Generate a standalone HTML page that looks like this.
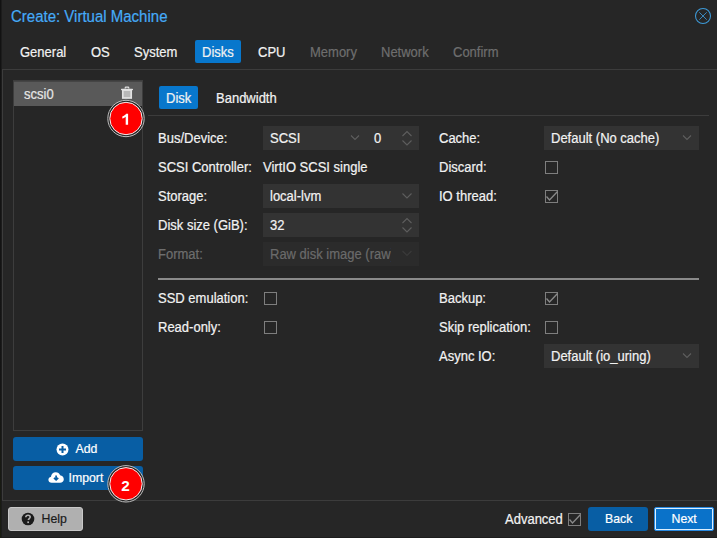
<!DOCTYPE html>
<html><head><meta charset="utf-8">
<style>
*{margin:0;padding:0;box-sizing:border-box}
html,body{width:717px;height:538px;overflow:hidden;background:#262626}
body{position:relative;font-family:"Liberation Sans",sans-serif;font-size:13px;color:#f2f2f2}
.a{position:absolute}
.t{position:absolute;white-space:nowrap;line-height:15px;font-size:13px;-webkit-text-stroke:0.2px currentColor;transform:scaleY(1.07);transform-origin:0 12px}
.dis{color:#6e6e6e}
.field{position:absolute;background:#333333;height:24px}
.cb{position:absolute;width:13px;height:13px;border:1px solid #7e7e7e}
.chev{position:absolute}
.btn{position:absolute;border-radius:3px;background:#085ea4;color:#fff}
</style></head>
<body>
<!-- window left dark edge -->
<div class="a" style="left:0;top:0;width:1px;height:538px;background:linear-gradient(#121212 0,#141414 380px,#1a1d12 538px)"></div>
<div class="a" style="left:1px;top:0;width:1px;height:538px;background:#1c1c1c"></div>

<div class="a" style="left:2px;top:537px;width:715px;height:1px;background:#1d1d1d"></div>
<!-- title -->
<div class="t" style="left:11px;top:8px;font-size:15px;line-height:17px;color:#45abf8">Create: Virtual Machine</div>
<!-- close icon -->
<svg class="a" style="left:694px;top:7px" width="18" height="18" viewBox="0 0 18 18">
 <circle cx="9" cy="9" r="7.5" fill="none" stroke="#3d9ad8" stroke-width="1.05"/>
 <path d="M5.3 5.3L12.7 12.7M12.7 5.3L5.3 12.7" stroke="#3d9ad8" stroke-width="0.85"/>
</svg>

<!-- tabs -->
<div class="a" style="left:195px;top:40px;width:46px;height:23px;background:#0877cc;border-radius:2px"></div>
<div class="t" style="left:20px;top:45px">General</div>
<div class="t" style="left:91px;top:45px">OS</div>
<div class="t" style="left:134px;top:45px">System</div>
<div class="t" style="left:202px;top:45px">Disks</div>
<div class="t" style="left:258px;top:45px">CPU</div>
<div class="t dis" style="left:310px;top:45px">Memory</div>
<div class="t dis" style="left:381px;top:45px">Network</div>
<div class="t dis" style="left:453px;top:45px">Confirm</div>

<!-- body panel border -->
<div class="a" style="left:2px;top:69px;width:715px;height:432px;border-top:1px solid #3c3c3c;border-left:1px solid #3c3c3c;border-bottom:1px solid #3c3c3c"></div>

<!-- left list -->
<div class="a" style="left:13px;top:80px;width:130px;height:351px;border:1px solid #3d3d3d"></div>
<div class="a" style="left:14px;top:81px;width:128px;height:1px;background:#454545"></div><div class="a" style="left:14px;top:82px;width:128px;height:24px;background:#595959"></div>
<div class="t" style="left:24px;top:87px;color:#e6e6e6">scsi0</div>
<!-- trash -->
<svg class="a" style="left:120px;top:86px" width="14" height="14" viewBox="0 0 14 14">
 <path d="M5.2 2.6V1.9c0-0.5 0.3-0.8 0.8-0.8h2c0.5 0 0.8 0.3 0.8 0.8v0.7" fill="none" stroke="#e2e2e2" stroke-width="1.2"/>
 <rect x="1" y="2.7" width="12" height="1.5" rx="0.6" fill="#e2e2e2"/>
 <rect x="2.8" y="4.1" width="8.4" height="7.9" fill="#b8b8b8" stroke="#e2e2e2" stroke-width="1.7"/>
</svg>

<!-- Add / Import -->
<div class="btn" style="left:13px;top:437px;width:130px;height:24px"></div>
<svg class="a" style="left:56px;top:443px" width="13" height="13" viewBox="0 0 13 13">
 <circle cx="6.5" cy="6.5" r="6" fill="#fff"/>
 <path d="M6.5 3v7M3 6.5h7" stroke="#085ea4" stroke-width="2"/>
</svg>
<div class="t" style="left:75.5px;top:442px;color:#fff;font-size:12.3px">Add</div>
<div class="btn" style="left:13px;top:466px;width:130px;height:24px"></div>
<svg class="a" style="left:48px;top:471px" width="17" height="13" viewBox="0 0 17 13">
 <path d="M3.6 11.8C1.8 11.8 0.4 10.5 0.4 8.8 0.4 7.2 1.5 6 3 5.7 3.1 3.3 5.1 1.2 7.8 1.2c2 0 3.7 1.2 4.3 3 2.1 0.2 3.7 1.9 3.7 4 0 2-1.6 3.6-3.7 3.6z" fill="#fff"/>
 <path d="M8.1 4.6v4.3M6 6.8l2.1 2.1 2.1-2.1" stroke="#085ea4" stroke-width="1.7" fill="none"/>
</svg>
<div class="t" style="left:68.5px;top:471px;color:#fff;font-size:12.3px">Import</div>

<!-- badges -->
<svg class="a" style="left:106px;top:99px" width="40" height="40" viewBox="0 0 40 40">
 <circle cx="20" cy="19.5" r="18.2" fill="#262626" stroke="#bdbdbd" stroke-width="1"/>
 <circle cx="20" cy="19.5" r="16.2" fill="#ff0000" stroke="#f0f0f0" stroke-width="1"/>
 <path d="M22.1 14.8V25.7H19.7V17.8C19 18.5 17.8 19.2 16.3 19.6V17.5C17 17.3 17.8 16.9 18.6 16.3 19.4 15.7 19.9 15.2 20.2 14.8Z" fill="#fff"/>
</svg>
<svg class="a" style="left:106px;top:464px" width="40" height="40" viewBox="0 0 40 40">
 <circle cx="20" cy="19.8" r="18.2" fill="#262626" stroke="#bdbdbd" stroke-width="1"/>
 <circle cx="20" cy="19.8" r="16.2" fill="#ff0000" stroke="#f0f0f0" stroke-width="1"/>
 <text x="19.5" y="26.6" text-anchor="middle" style="font-family:'Liberation Sans';font-weight:bold" font-size="15.3" fill="#fff">2</text>
</svg>

<!-- inner tabs -->
<div class="a" style="left:159px;top:86px;width:39px;height:23px;background:#0877cc;border-radius:2px"></div>
<div class="t" style="left:166px;top:91px">Disk</div>
<div class="t" style="left:216px;top:91px">Bandwidth</div>
<div class="a" style="left:148px;top:115px;width:561px;height:1px;background:#3c3c3c"></div>

<!-- left column form -->
<div class="t" style="left:158px;top:131px">Bus/Device:</div>
<div class="field" style="left:263px;top:126px;width:156px"></div>
<div class="t" style="left:270px;top:131px">SCSI</div>
<div class="t" style="left:374px;top:131px">0</div>
<div class="t" style="left:158px;top:160px">SCSI Controller:</div>
<div class="t" style="left:263px;top:160px">VirtIO SCSI single</div>
<div class="t" style="left:158px;top:189px">Storage:</div>
<div class="field" style="left:263px;top:184px;width:156px"></div>
<div class="t" style="left:270px;top:189px">local-lvm</div>
<div class="t" style="left:158px;top:218px">Disk size (GiB):</div>
<div class="field" style="left:263px;top:213px;width:156px"></div>
<div class="t" style="left:270px;top:218px">32</div>
<div class="t dis" style="left:158px;top:247px">Format:</div>
<div class="field" style="left:263px;top:242px;width:156px;background:#2b2b2b"></div>
<div class="t" style="left:270px;top:247px;width:121px;overflow:hidden;color:#6a6a6a">Raw disk image (raw)</div>

<!-- right column form -->
<div class="t" style="left:439px;top:131px">Cache:</div>
<div class="field" style="left:544px;top:126px;width:155px"></div>
<div class="t" style="left:551px;top:131px">Default (No cache)</div>
<div class="t" style="left:439px;top:160px">Discard:</div>
<div class="cb" style="left:545px;top:161px"></div>
<div class="t" style="left:439px;top:189px">IO thread:</div>
<div class="cb" style="left:545px;top:190px"></div>

<!-- separator -->
<div class="a" style="left:158px;top:278px;width:541px;height:2px;background:#8a8a8a"></div>

<div class="t" style="left:158px;top:291px">SSD emulation:</div>
<div class="cb" style="left:264px;top:292px"></div>
<div class="t" style="left:158px;top:320px">Read-only:</div>
<div class="cb" style="left:264px;top:321px"></div>

<div class="t" style="left:439px;top:291px">Backup:</div>
<div class="cb" style="left:545px;top:292px"></div>
<div class="t" style="left:439px;top:320px">Skip replication:</div>
<div class="cb" style="left:545px;top:321px"></div>
<div class="t" style="left:439px;top:349px">Async IO:</div>
<div class="field" style="left:544px;top:344px;width:155px"></div>
<div class="t" style="left:551px;top:349px">Default (io_uring)</div>

<!-- chevrons & checks -->
<svg class="a" style="left:0;top:0" width="717" height="538" viewBox="0 0 717 538" fill="none">
 <g stroke="#5e5e5e" stroke-width="1.1">
  <path d="M351 135.5l4 4 4-4"/>
  <path d="M402.5 193.5l4.5 4.5 4.5-4.5"/>
  <path d="M683 135.5l4 4 4-4"/>
  <path d="M683 353.5l4 4 4-4"/>
  <path d="M402.5 136l4.5-4.5 4.5 4.5M402.5 140.5l4.5 4.5 4.5-4.5"/>
  <path d="M402.5 223l4.5-4.5 4.5 4.5M402.5 227.5l4.5 4.5 4.5-4.5"/>
 </g>
 <path d="M402.5 251l4.5 4.5 4.5-4.5" stroke="#3a3a3a" stroke-width="1.1"/>
 <g stroke="#8a8a8a" stroke-width="1.3">
  <path d="M546.5 196.5l3 3.5 8-8.5"/>
  <path d="M546.5 298.5l3 3.5 8-8.5"/>
  <path d="M569.5 519.5l3 3.5 8-8.5"/>
 </g>
</svg>

<!-- footer -->
<div class="a" style="left:8px;top:507px;width:75px;height:24px;border-radius:3px;background:#b0b0b0;border:1px solid #c8c8c8"></div>
<svg class="a" style="left:21.3px;top:512px" width="14" height="14" viewBox="0 0 14 14">
 <circle cx="7" cy="7" r="6.3" fill="#1b1b1b"/>
 <path d="M4.8 5.3c0-1.3 1-2.1 2.2-2.1 1.3 0 2.2 0.8 2.2 1.9 0 1.5-1.8 1.6-1.8 2.9" stroke="#b0b0b0" stroke-width="1.6" fill="none"/>
 <rect x="6.3" y="9.4" width="1.7" height="1.7" fill="#b0b0b0"/>
</svg>
<div class="t" style="left:41.5px;top:511.7px;color:#1b1b1b;font-size:12.3px">Help</div>

<div class="t" style="left:505px;top:512px">Advanced</div>
<div class="cb" style="left:568px;top:513px"></div>

<div class="btn" style="left:588px;top:507px;width:60px;height:24px"></div>
<div class="t" style="left:605px;top:512px;color:#fff;font-size:12.3px">Back</div>
<div class="btn" style="left:654px;top:507px;width:60px;height:24px;background:#0a72c9;border:1px solid #2a8ae0;box-shadow:inset 0 0 0 1px #dcefff;border-radius:2px"></div>
<div class="t" style="left:671.5px;top:512px;color:#fff;font-size:12.3px">Next</div>
</body></html>
